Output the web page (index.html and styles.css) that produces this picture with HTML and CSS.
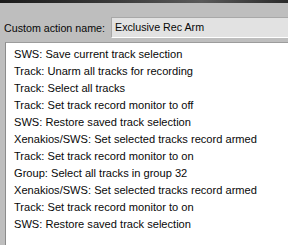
FILE: index.html
```html
<!DOCTYPE html>
<html>
<head>
<meta charset="utf-8">
<link rel="stylesheet" href="styles.css">
</head>
<body>
<div class="topbar"></div>
<div class="namerow">
  <span class="label">Custom action name:</span>
  <div class="field">Exclusive Rec Arm</div>
</div>
<div class="list">
  <div class="item">SWS: Save current track selection</div>
  <div class="item">Track: Unarm all tracks for recording</div>
  <div class="item">Track: Select all tracks</div>
  <div class="item">Track: Set track record monitor to off</div>
  <div class="item">SWS: Restore saved track selection</div>
  <div class="item">Xenakios/SWS: Set selected tracks record armed</div>
  <div class="item">Track: Set track record monitor to on</div>
  <div class="item">Group: Select all tracks in group 32</div>
  <div class="item">Xenakios/SWS: Set selected tracks record armed</div>
  <div class="item">Track: Set track record monitor to on</div>
  <div class="item">SWS: Restore saved track selection</div>
</div>
</body>
</html>
```
FILE: styles.css
```css
html, body {
  margin: 0;
  padding: 0;
  height: 100%;
  overflow: hidden;
}
body {
  display: flex;
  flex-direction: column;
  background: #bebebe;
  font-family: "Liberation Sans", Arial, sans-serif;
  font-size: 10.7px;
  color: #080808;
}
.topbar {
  flex: none;
  height: 3px;
  background: linear-gradient(to right, #1a1a1a 0%, #3a3a3a 40%, #5a5a5a 70%, #2a2a2a 100%);
}
.namerow {
  flex: none;
  display: flex;
  align-items: center;
  margin-top: 14px;
  height: 21px;
}
.label {
  padding-left: 4px;
  width: 107px;
  flex: none;
}
.field {
  flex: 1;
  height: 19px;
  line-height: 19px;
  background: #e2e2e2;
  border-top: 1px solid #a8a8a8;
  border-left: 1px solid #a8a8a8;
  border-bottom: 1px solid #ffffff;
  padding-left: 3px;
}
.list {
  flex: 1;
  min-height: 0;
  margin-top: 4px;
  margin-left: 5px;
  background: #ffffff;
  border-top: 1px solid #9c9c9c;
  border-left: 1px solid #8c8c8c;
  padding-top: 3px;
  padding-left: 8px;
  font-size: 11.1px;
}
.item {
  line-height: 17px;
  white-space: nowrap;
}
```
